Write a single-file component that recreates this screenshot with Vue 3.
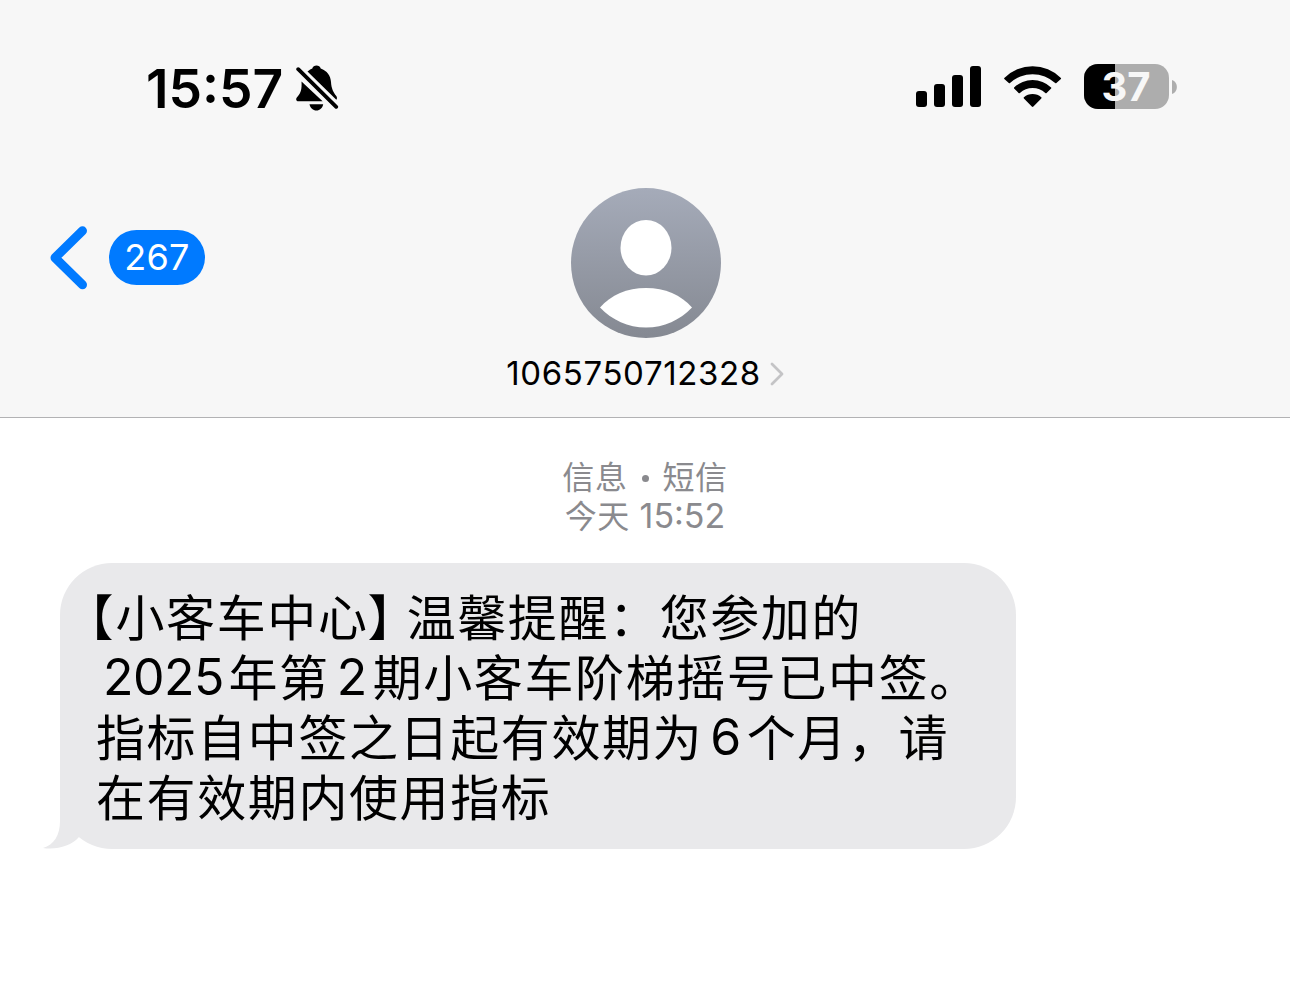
<template>
  <div class="screen">
    <header class="header">
      <div class="status-bar">
        <span class="time">15:57</span>
        <svg class="bell" viewBox="296 64 44 48">
          <path d="M301.500 81.500L322.600 101.300H298.500C296 101.300 295.500 98.900 297 97.200C300.500 93.500 302 90.500 301.500 81.500Z" />
          <path d="M307.500 71.500C309.500 69.800 311 69.200 312.300 68.500C313 64.500 320 64.500 320.700 68.500C327 70.800 330.600 75.500 331 82C331.300 88.500 333.500 92.500 336.300 96C337.200 97.400 337.200 98.900 336.300 99.800Z" />
          <path d="M309.500 104.300H323.200C322.400 108.200 319.800 110.600 316.400 110.600C313 110.600 310.400 108.200 309.500 104.300Z" />
          <path class="slash" d="M298.200 69.200L336.200 106.800" />
        </svg>
        <div class="indicators">
          <svg class="signal" viewBox="0 0 65 42">
            <rect
              v-for="bar in bars"
              :key="bar.x"
              :x="bar.x"
              :y="41 - bar.h"
              width="11"
              :height="bar.h"
              rx="3"
            />
          </svg>
          <svg class="wifi" viewBox="1004 65 58 43">
            <path d="M1004.300 77.900A40 40 0 0 1 1060.900 77.900Q1061.300 78.400 1060.900 78.900L1056.400 83.100Q1055.800 83.600 1055.200 83.100A33 33 0 0 0 1010 83.100Q1009.400 83.600 1008.800 83.100L1004.300 78.900Q1003.900 78.400 1004.300 77.900Z" />
            <path d="M1014.100 87.400A27 27 0 0 1 1051.100 87.400Q1051.600 88 1051.100 88.500L1046.600 92.900Q1046 93.500 1045.300 92.900A19 19 0 0 0 1019.900 92.900Q1019.200 93.500 1018.600 92.900L1014.100 88.500Q1013.600 88 1014.100 87.400Z" />
            <path d="M1023.900 97.300A13.200 13.200 0 0 1 1041.300 97.300Q1041.900 97.900 1041.300 98.500L1033.400 106.500Q1032.600 107.300 1031.800 106.500L1023.900 98.500Q1023.300 97.900 1023.900 97.300Z" />
          </svg>
          <div class="battery">
            <div class="battery-fill" :style="{ width: battery + '%' }"></div>
            <span class="battery-text">{{ battery }}</span>
          </div>
          <svg class="battery-tip" viewBox="0 0 5 14">
            <path d="M0 0C6.500 2 6.500 12 0 14Z" />
          </svg>
        </div>
      </div>

      <div class="nav">
        <div class="back">
          <svg class="chevron" viewBox="0 0 38 64">
            <path d="M32.500 4.800L5 31.800L32.500 58.800" />
          </svg>
          <span class="unread">267</span>
        </div>
        <div class="contact">
          <svg class="avatar" viewBox="0 0 150 150">
            <defs>
              <linearGradient id="avatar-bg" x1="0" y1="0" x2="0" y2="1">
                <stop offset="0" stop-color="#a5abb9" />
                <stop offset="1" stop-color="#858992" />
              </linearGradient>
            </defs>
            <circle cx="75" cy="75" r="75" fill="url(#avatar-bg)" />
            <ellipse cx="75" cy="59.700" rx="25.500" ry="27.800" fill="#fff" />
            <path d="M29 119.500C40 107 56 100 75 100S110 107 121 119.500C109 132 93 139.500 75 139.500S41 132 29 119.500Z" fill="#fff" />
          </svg>
          <div class="name">
            <span>1065750712328</span>
            <svg class="more" viewBox="0 0 14 24">
              <path d="M2 2L12 12L2 22" />
            </svg>
          </div>
        </div>
      </div>
    </header>

    <main class="thread">
      <div class="stamp">
        <div class="stamp-line">信息<i class="dot"></i>短信</div>
        <div class="stamp-line">今天 <span class="stamp-time">15:52</span></div>
      </div>
      <div class="bubble">
        <svg class="tail" viewBox="0 0 48 50">
          <path d="M17 0V22C17 36 11 46 0 49C14 51 28 47 36 38L48 25V0Z" />
        </svg>
        <p class="line"><span class="open">【</span>小客车中心<span class="close">】</span>温馨提醒：您参加的</p>
        <p class="line"><span class="num year">2025</span>年第<span class="num single">2</span>期小客车阶梯摇号已中签。</p>
        <p class="line">指标自中签之日起有效期为<span class="num single">6</span>个月，请</p>
        <p class="line">在有效期内使用指标</p>
      </div>
    </main>
  </div>
</template>

<script setup>
  const battery = 37

  const bars = [
    { x: 0, h: 16 },
    { x: 18, h: 23 },
    { x: 36, h: 32 },
    { x: 54, h: 41 },
  ]
</script>

<style>
  body {
    background: #fff;
  }
</style>

<style scoped>
  .screen {
    width: 1290px;
    height: 999px;
    overflow: hidden;
    background: #fff;
    color: #000;
    font-family: Inter, "Noto Sans CJK SC", sans-serif;
  }

  .header {
    box-sizing: border-box;
    height: 418px;
    background: #f7f7f7;
    border-bottom: 1px solid #b2b2b4;
  }

  .status-bar {
    display: flex;
    align-items: flex-start;
    height: 188px;
    padding: 64px 113px 0 146px;
    box-sizing: border-box;
  }

  .time {
    width: 150px;
    line-height: 49px;
    font-size: 53.3px;
    font-weight: 600;
    white-space: nowrap;
  }

  .bell {
    width: 44px;
    height: 48px;
  }

  .slash {
    stroke: #000;
    stroke-width: 3.8;
    stroke-linecap: round;
  }

  .indicators {
    display: flex;
    align-items: flex-start;
    margin-left: auto;
  }

  .signal {
    width: 65px;
    height: 42px;
    margin: 2px 23px 0 0;
  }

  .wifi {
    width: 58px;
    height: 43px;
    margin: 1px 22px 0 0;
  }

  .battery {
    position: relative;
    width: 85px;
    height: 45px;
    border-radius: 14px;
    background: #adadad;
  }

  .battery-fill {
    height: 100%;
    border-radius: 14px 0 0 14px;
    background: #000;
  }

  .battery-text {
    position: absolute;
    inset: 0 1px 0 0;
    color: #f7f7f7;
    font-size: 40px;
    font-weight: 700;
    line-height: 46px;
    text-align: center;
  }

  .battery-tip {
    width: 5px;
    height: 14px;
    margin: 16px 0 0 3px;
    fill: #adadad;
  }

  .nav {
    display: grid;
    grid-template-columns: 1fr 290px 1fr;
  }

  .back {
    display: flex;
    align-items: center;
    height: 64px;
    margin-top: 38px;
    padding-left: 50px;
  }

  .chevron {
    width: 38px;
    height: 64px;
    fill: none;
    stroke: #007aff;
    stroke-width: 9;
    stroke-linecap: round;
    stroke-linejoin: round;
  }

  .unread {
    width: 96px;
    height: 55px;
    margin: 0 0 1px 21px;
    border-radius: 28px;
    background: #007aff;
    color: #fff;
    font-size: 36px;
    line-height: 55px;
    text-align: center;
    letter-spacing: 0.3px;
  }

  .contact {
    display: flex;
    flex-direction: column;
    align-items: center;
  }

  .avatar {
    width: 150px;
    height: 150px;
    margin-left: 2px;
  }

  .name {
    display: flex;
    align-items: center;
    gap: 9px;
    margin-top: 15px;
    font-size: 33px;
    line-height: 40px;
    letter-spacing: 0.6px;
  }

  .more {
    width: 14px;
    height: 24px;
    margin-top: 2px;
    fill: none;
    stroke: #c4c4c6;
    stroke-width: 2.8;
    stroke-linecap: round;
    stroke-linejoin: round;
  }

  .stamp {
    padding-top: 41px;
    color: #8a8a8e;
    font-size: 32px;
    letter-spacing: 0.6px;
    text-align: center;
  }

  .stamp-line {
    height: 38px;
    line-height: 38px;
  }

  .dot {
    display: inline-block;
    width: 7px;
    height: 7px;
    margin: 0 14px 7px;
    border-radius: 50%;
    background: #8a8a8e;
  }

  .stamp-time {
    font-size: 34px;
    letter-spacing: 0;
  }

  .bubble {
    position: relative;
    box-sizing: border-box;
    width: 956px;
    height: 286px;
    margin: 28px 0 0 60px;
    padding: 26px 0 0 36px;
    border-radius: 52px;
    background: #e9e9eb;
  }

  .tail {
    position: absolute;
    left: -17px;
    bottom: 0;
    width: 48px;
    height: 50px;
    fill: #e9e9eb;
  }

  .line {
    position: relative;
    height: 60px;
    margin: 0;
    font-size: 49px;
    line-height: 60px;
    letter-spacing: 1.6px;
    white-space: nowrap;
  }

  /* half-width brackets */
  .open,
  .close {
    font-feature-settings: "halt";
    letter-spacing: 0;
  }

  .open {
    margin: 0 2px 0 -7px;
  }

  .close {
    margin: 0 14.6px 0 -1px;
  }

  .num {
    font-size: 50px;
    line-height: 0;
    letter-spacing: 0;
    vertical-align: 1px;
  }

  .year {
    margin: 0 4.5px 0 7px;
    letter-spacing: -0.5px;
  }

  .single {
    margin: 0 5.5px 0 7px;
  }
</style>
